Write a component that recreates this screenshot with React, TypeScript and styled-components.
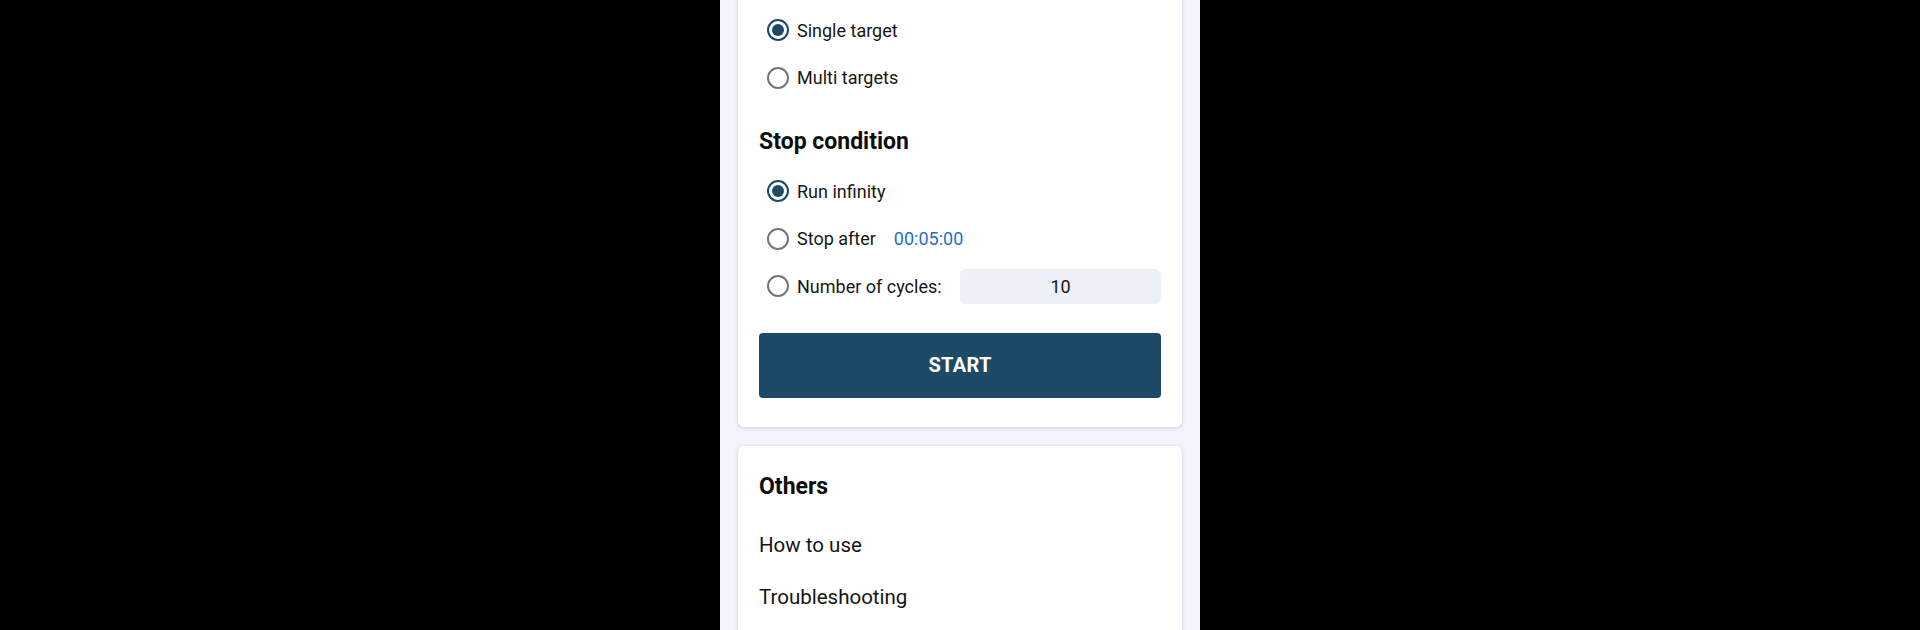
import styled, { createGlobalStyle } from "styled-components";

const GlobalStyle = createGlobalStyle`
  html, body {
    margin: 0;
    padding: 0;
    background: #000;
    font-family: Roboto, "Noto Sans", sans-serif;
    color: #151515;
  }
`;

const targetOptions = [
  { label: "Single target", checked: true },
  { label: "Multi targets", checked: false },
];

const otherLinks = ["How to use", "Troubleshooting"];

export default function App() {
  return (
    <>
      <GlobalStyle />
      <Screen>
        <Phone>
          <Card $first>
            {targetOptions.map((opt) => (
              <OptionRow key={opt.label}>
                <Radio $checked={opt.checked} />
                <OptionLabel>{opt.label}</OptionLabel>
              </OptionRow>
            ))}

            <SectionTitle $top={25.5}>Stop condition</SectionTitle>

            <OptionList>
              <OptionRow>
                <Radio $checked />
                <OptionLabel>Run infinity</OptionLabel>
              </OptionRow>
              <OptionRow>
                <Radio />
                <OptionLabel>Stop after</OptionLabel>
                <TimeValue>00:05:00</TimeValue>
              </OptionRow>
              <OptionRow>
                <Radio />
                <OptionLabel>Number of cycles:</OptionLabel>
                <CycleInput>10</CycleInput>
              </OptionRow>
            </OptionList>

            <StartButton>START</StartButton>
          </Card>

          <Card>
            <SectionTitle $top={0}>Others</SectionTitle>
            <LinkList>
              {otherLinks.map((l) => (
                <LinkItem key={l}>{l}</LinkItem>
              ))}
            </LinkList>
          </Card>
        </Phone>
      </Screen>
    </>
  );
}

const Screen = styled.div`
  width: 1920px;
  height: 630px;
  display: flex;
  justify-content: center;
  overflow: hidden;
  background: #000;
`;

const Phone = styled.div`
  width: 480px;
  height: 630px;
  background: #f2f5fc;
  padding: 0 18px;
  box-sizing: border-box;
  display: flex;
  flex-direction: column;
  gap: 19.3px;
  overflow: hidden;
`;

const Card = styled.div<{ $first?: boolean }>`
  background: #fff;
  border-radius: 6px;
  box-shadow: 0 1px 4px rgba(30, 40, 70, 0.18);
  padding: ${(p) => (p.$first ? "16.5px 21px 29px 21px" : "25.7px 21px 40px 21px")};
  margin-top: ${(p) => (p.$first ? "-10px" : "0")};
  flex-shrink: 0;
`;

const OptionList = styled.div`
  margin-top: 10.7px;
`;

const OptionRow = styled.div`
  height: 47.5px;
  display: flex;
  align-items: center;
  padding-left: 8px;
`;

const Radio = styled.span<{ $checked?: boolean }>`
  width: 22px;
  height: 22px;
  box-sizing: border-box;
  border-radius: 50%;
  border: 2px solid ${(p) => (p.$checked ? "#1d4a66" : "#767676")};
  display: flex;
  align-items: center;
  justify-content: center;
  flex-shrink: 0;

  &::after {
    content: "";
    width: 12px;
    height: 12px;
    border-radius: 50%;
    background: #1d4a66;
    display: ${(p) => (p.$checked ? "block" : "none")};
  }
`;

const OptionLabel = styled.span`
  margin-left: 8px;
  font-size: 18px;
  color: #161616;
`;

const TimeValue = styled.span`
  margin-left: 18px;
  font-size: 18px;
  color: #1f6fc8;
`;

const CycleInput = styled.div`
  margin-left: auto;
  width: 201px;
  height: 35px;
  border-radius: 6px;
  background: #edf0f6;
  display: flex;
  align-items: center;
  justify-content: center;
  font-size: 18px;
  color: #161616;
`;

const SectionTitle = styled.div<{ $top: number }>`
  margin-top: ${(p) => p.$top}px;
  line-height: 30px;
  font-size: 23px;
  font-weight: 700;
  color: #0d0d0d;
`;

const StartButton = styled.button`
  margin-top: 22.5px;
  width: 100%;
  height: 65px;
  border: none;
  border-radius: 4px;
  background: #1d4a66;
  color: #fff;
  font-family: Roboto, "Noto Sans", sans-serif;
  font-size: 20px;
  font-weight: 700;
  letter-spacing: 0.3px;
  cursor: pointer;
`;

const LinkList = styled.div`
  margin-top: 17.3px;
`;

const LinkItem = styled.div`
  height: 52px;
  display: flex;
  align-items: center;
  font-size: 20.5px;
  color: #141414;
`;
